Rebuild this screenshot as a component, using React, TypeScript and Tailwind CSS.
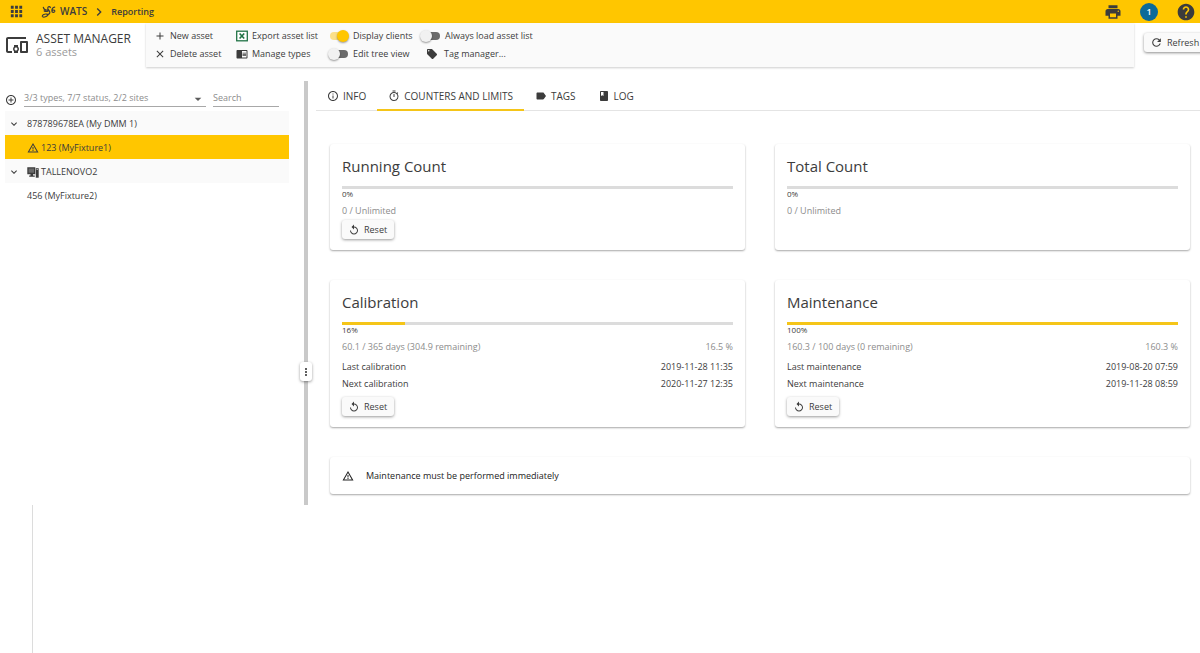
import { useState } from "react";
import type { ReactNode } from "react";
import {
  MdAdd, MdAddCircleOutline, MdApps, MdArrowDropDown, MdChevronRight, MdChromeReaderMode, MdClass,
  MdClose, MdDevicesOther, MdExpandMore, MdHelp, MdInfoOutline, MdLabel, MdLocalOffer, MdMoreVert,
  MdOutlineTimer, MdPrint, MdRefresh, MdReplay, MdWarningAmber,
} from "react-icons/md";

interface Counter {
  title: string;
  percent: number;
  usage: string;
  exact?: string;
  dates?: { label: string; value: string }[];
  resettable: boolean;
}

const COUNTERS: Counter[] = [
  { title: "Running Count", percent: 0, usage: "0 / Unlimited", resettable: true },
  { title: "Total Count", percent: 0, usage: "0 / Unlimited", resettable: false },
  {
    title: "Calibration", percent: 16, usage: "60.1 / 365 days (304.9 remaining)", exact: "16.5 %",
    dates: [
      { label: "Last calibration", value: "2019-11-28 11:35" },
      { label: "Next calibration", value: "2020-11-27 12:35" },
    ],
    resettable: true,
  },
  {
    title: "Maintenance", percent: 100, usage: "160.3 / 100 days (0 remaining)", exact: "160.3 %",
    dates: [
      { label: "Last maintenance", value: "2019-08-20 07:59" },
      { label: "Next maintenance", value: "2019-11-28 08:59" },
    ],
    resettable: true,
  },
];

const TABS = [
  { id: "info", label: "INFO", icon: <MdInfoOutline size={12} /> },
  { id: "counters", label: "COUNTERS AND LIMITS", icon: <MdOutlineTimer size={12} /> },
  { id: "tags", label: "TAGS", icon: <MdLabel size={12} /> },
  { id: "log", label: "LOG", icon: <MdClass size={12} /> },
];

export default function App() {
  const [tab, setTab] = useState("counters");

  return (
    <div className="min-h-screen overflow-x-hidden bg-white font-['Open_Sans',sans-serif] text-[9px] text-[#3c3c3c]">
      <TopBar />
      <Toolbar />
      <div className="mt-3.5 flex">
        <AssetTree />
        <Splitter />
        <main className="ml-2 min-w-0 flex-1">
          <div role="tablist" className="flex h-[30px] border-b border-[#e4e4e4]">
            {TABS.map((t) => (
              <button
                key={t.id}
                role="tab"
                aria-selected={tab === t.id}
                onClick={() => setTab(t.id)}
                className={`-mb-px flex items-center gap-1 border-b-2 px-[11px] pt-0.5 text-[10px] ${tab === t.id ? "border-[#f5c518]" : "border-transparent"}`}
              >
                {t.icon}
                {t.label}
              </button>
            ))}
          </div>
          <div className="grid grid-cols-2 gap-[30px] pt-[33px] pr-2.5 pb-[11px] pl-3.5">
            {COUNTERS.map((c) => <CounterCard key={c.title} counter={c} />)}
            <div role="alert" className="col-span-2 flex h-[37px] items-center gap-3 rounded-[3px] px-3 text-[#222] shadow-[0_1px_2px_rgba(0,0,0,0.35)]">
              <MdWarningAmber size={12} />
              Maintenance must be performed immediately
            </div>
          </div>
        </main>
      </div>
      <div className="ml-8 h-[148px] border-l border-[#dcdcdc]" />
    </div>
  );
}

function TopBar() {
  return (
    <header className="flex h-[23px] items-center bg-[#ffc600] pr-1 pl-2 font-semibold text-[#3c3c3c]">
      <button aria-label="Apps"><MdApps size={17} /></button>
      <nav className="ml-4 flex items-center gap-1">
        <a href="#wats" className="flex items-center gap-1 text-[10px]"><Logo />WATS</a>
        <MdChevronRight size={16} />
        <a href="#reporting">Reporting</a>
      </nav>
      <div className="ml-auto flex items-center gap-[18px]">
        <button aria-label="Print"><MdPrint size={18} /></button>
        <button className="size-[18px] rounded-full bg-[#0c6a98] text-white">1</button>
        <button aria-label="Help"><MdHelp size={20} /></button>
      </div>
    </header>
  );
}

function Logo() {
  return (
    <svg viewBox="0 0 16 14" className="h-3.5 w-[15px]" fill="none" stroke="currentColor" strokeWidth="1.3" strokeLinecap="round">
      <path d="M2.500 2c.4 2.300 2.600 3.400 5 2.600M3.400 5.800c1.400.9 3 .8 4.600-.2" />
      <path d="M10 2.200C9.400.8 7.400 1 7.200 2.900c-.1 1.900 2.400 2.700 2.200 4.900-.2 1.500-1.700 2-3.300 1.500-2-.6-4.900.9-4.700 2.400.4 1.300 4.500.9 6.100-1.500" />
      <path d="M14.600 1.800c-1.900.3-3.100 2-3 4.200.1 1.800 2.700 2 3.100.4.300-1.500-1.500-2-2.700-1" />
    </svg>
  );
}

function Toolbar() {
  return (
    <div className="flex h-11">
      <div className="flex w-[146px] shrink-0 items-center gap-[7px] pl-[5px]">
        <MdDevicesOther size={24} />
        <div>
          <h1 className="text-[12px] leading-[14px]">ASSET MANAGER</h1>
          <p className="text-[11px] leading-3 text-[#9a9a9a]">6 assets</p>
        </div>
      </div>
      <div className="grid min-w-0 flex-1 grid-flow-col grid-cols-[82px_92px_92px_auto] grid-rows-[18px_18px] content-start justify-start bg-[#fafafa] pt-1 pl-2 shadow-[0_1px_2px_rgba(0,0,0,0.2)]">
        <Action icon={<MdAdd size={12} />}>New asset</Action>
        <Action icon={<MdClose size={12} />}>Delete asset</Action>
        <Action icon={<ExcelIcon />}>Export asset list</Action>
        <Action icon={<MdChromeReaderMode size={12} />}>Manage types</Action>
        <Toggle label="Display clients" defaultChecked />
        <Toggle label="Edit tree view" />
        <Toggle label="Always load asset list" />
        <button className="flex items-center gap-1 pl-1.5 whitespace-nowrap">
          <MdLocalOffer size={12} />
          <span className="pl-0.5">Tag manager...</span>
        </button>
      </div>
      <div className="w-[66px] shrink-0 pt-2.5 pl-2.5">
        <button className="flex h-[19px] w-[66px] items-center gap-1 rounded-[3px] bg-[#fafafa] pl-1.5 shadow-[0_1px_3px_rgba(0,0,0,0.45)]">
          <MdRefresh size={13} />
          Refresh
        </button>
      </div>
    </div>
  );
}

function Action({ icon, children }: { icon: ReactNode; children: ReactNode }) {
  return (
    <button className="flex items-center gap-1 whitespace-nowrap">
      {icon}
      {children}
    </button>
  );
}

function ExcelIcon() {
  return (
    <svg viewBox="0 0 12 12" className="size-3" fill="none">
      <rect x="0.700" y="1.200" width="10.600" height="9.600" fill="#fff" stroke="#217346" strokeWidth="1.300" />
      <path d="M3.600 3.500l4.600 5M8.200 3.500l-4.600 5" stroke="#217346" strokeWidth="1.600" />
    </svg>
  );
}

function Toggle({ label, defaultChecked }: { label: string; defaultChecked?: boolean }) {
  return (
    <label className="flex cursor-pointer items-center gap-1 whitespace-nowrap">
      <span className="relative flex h-3 w-[21px] items-center">
        <input
          type="checkbox"
          role="switch"
          defaultChecked={defaultChecked}
          className="peer ml-0.5 h-2 w-[18px] appearance-none rounded-full bg-[#6b6b6b] checked:bg-[#fbe08a]"
        />
        <span className="pointer-events-none absolute left-0 size-3 rounded-full bg-[#f1f1f1] shadow-[0_1px_2px_rgba(0,0,0,0.4)] peer-checked:left-[9px] peer-checked:bg-[#ffc600]" />
      </span>
      {label}
    </label>
  );
}

function AssetTree() {
  return (
    <aside className="w-[304px] shrink-0 pr-[15px] pl-[5px]">
      <div className="flex h-[30px] items-start pt-2">
        <button aria-label="Add filter" className="mt-[5px] mr-[7px]"><MdAddCircleOutline size={12} /></button>
        <div className="relative w-[182px] border-b border-[#a8a8a8]">
          <select aria-label="Asset filter" className="block h-[17px] w-full appearance-none bg-transparent text-[#8c8c8c]">
            <option>3/3 types, 7/7 status, 2/2 sites</option>
          </select>
          <MdArrowDropDown size={16} className="pointer-events-none absolute top-0.5 right-0 text-[#5c5c5c]" />
        </div>
        <input
          type="text"
          aria-label="Search assets"
          placeholder="Search"
          className="ml-[7px] block h-[18px] w-[66px] border-b border-[#a8a8a8] bg-transparent placeholder:text-[#8c8c8c]"
        />
      </div>
      <ul role="tree" aria-label="Assets">
        <TreeRow expandable>878789678EA (My DMM 1)</TreeRow>
        <TreeRow selected icon={<MdWarningAmber size={12} />}>123 (MyFixture1)</TreeRow>
        <TreeRow expandable icon={<ClientIcon />}>TALLENOVO2</TreeRow>
        <TreeRow>456 (MyFixture2)</TreeRow>
      </ul>
    </aside>
  );
}

function TreeRow({ children, icon, expandable, selected }: {
  children: ReactNode; icon?: ReactNode; expandable?: boolean; selected?: boolean;
}) {
  const bg = selected ? "bg-[#ffc600]" : expandable ? "bg-[#fafafa]" : "";
  return (
    <li role="treeitem" aria-selected={!!selected} aria-expanded={expandable ? true : undefined}>
      <button className={`flex h-6 w-full items-center pt-px ${bg}`}>
        <span className="flex w-[22px] justify-center pr-1">{expandable && <MdExpandMore size={12} />}</span>
        {icon && <span className="mr-0.5">{icon}</span>}
        {children}
      </button>
    </li>
  );
}

// Desktop monitor with a tower beside it
function ClientIcon() {
  return (
    <svg viewBox="0 0 12 12" className="size-3" fill="currentColor">
      <path d="M.3 1.200h8v7H6v1.300h1.800v1.200H2.200V9.500H3.500V8.200H.3z" />
      <path d="M1.600 2.500h5.400v4.200H1.600z" fill="#6a6a6a" />
      <path d="M8.800 2.200h2.900v9.500H8.800z" />
      <path d="M9.500 3.300h1.500v.7H9.500z" fill="#ccc" />
    </svg>
  );
}

function Splitter() {
  return (
    <div role="separator" aria-orientation="vertical" className="relative w-1 shrink-0 bg-[#c9c9c9]">
      <button aria-label="Resize panels" className="absolute top-[281px] -left-1 flex h-[19px] w-3 items-center justify-center rounded-[3px] bg-white shadow-[0_1px_3px_rgba(0,0,0,0.4)]">
        <MdMoreVert size={12} />
      </button>
    </div>
  );
}

function CounterCard({ counter }: { counter: Counter }) {
  return (
    <section className="rounded-[3px] px-3 pt-[11px] pb-[11px] shadow-[0_1px_2px_rgba(0,0,0,0.35)]">
      <h2 className="text-[15px] leading-[22px]">{counter.title}</h2>
      <div
        role="progressbar"
        aria-label={counter.title}
        aria-valuenow={counter.percent}
        className="mt-[9px] h-[3px] bg-[#dcdcdc]"
      >
        <div className="h-full bg-[#f5c518]" style={{ width: `${counter.percent}%` }} />
      </div>
      <p className="text-[8px] leading-[10px]">{counter.percent}%</p>
      <div className="mt-[5px] flex justify-between leading-[14px] text-[#8c8c8c]">
        <span>{counter.usage}</span>
        <span>{counter.exact}</span>
      </div>
      {counter.dates && (
        <dl className="mt-1 pb-[3px] leading-[17px]">
          {counter.dates.map((d) => (
            <div key={d.label} className="flex justify-between">
              <dt>{d.label}</dt>
              <dd>{d.value}</dd>
            </div>
          ))}
        </dl>
      )}
      {counter.resettable && (
        <button className="mt-0.5 flex h-[19px] w-[52px] items-center gap-1 rounded-[3px] bg-[#fafafa] pl-1.5 shadow-[0_1px_3px_rgba(0,0,0,0.4)]">
          <MdReplay size={12} />
          Reset
        </button>
      )}
    </section>
  );
}
